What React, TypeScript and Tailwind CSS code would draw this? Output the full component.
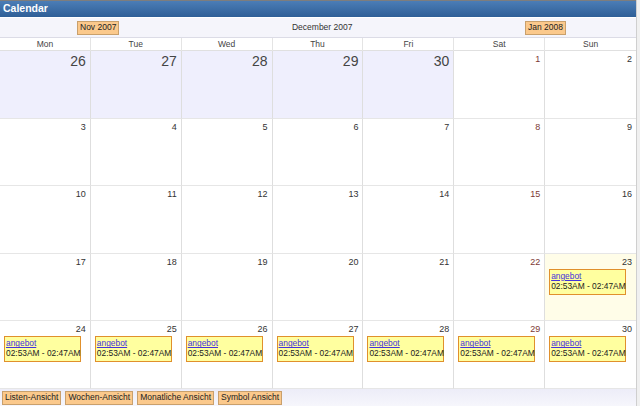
const days = ["Mon", "Tue", "Wed", "Thu", "Fri", "Sat", "Sun"];

type Cell = { n: number; prev?: boolean; today?: boolean; event?: boolean };

const weeks: Cell[][] = [
  [26, 27, 28, 29, 30].map((n) => ({ n, prev: true } as Cell)).concat([{ n: 1 }, { n: 2 }]),
  [3, 4, 5, 6, 7, 8, 9].map((n) => ({ n })),
  [10, 11, 12, 13, 14, 15, 16].map((n) => ({ n })),
  [17, 18, 19, 20, 21, 22].map((n) => ({ n } as Cell)).concat([{ n: 23, today: true, event: true }]),
  [24, 25, 26, 27, 28, 29, 30].map((n) => ({ n, event: true })),
];

function NavButton({ children }: { children: React.ReactNode }) {
  return (
    <span className="inline-flex h-[14px] items-center border border-[#c9a06c] bg-[#fbc98c] px-[2px] text-[8.5px] leading-none text-[#222]">
      {children}
    </span>
  );
}

function Event() {
  return (
    <div className="mx-[4px] mt-[2px] w-[77px] border border-[#e0902c] bg-[#ffff9f] px-[1px] pt-[1px] pb-[3px] text-[8.4px] leading-[10px]">
      <a href="#" className="text-[#4433dd] underline">
        angebot
      </a>
      <div className="whitespace-nowrap text-[#222]">02:53AM - 02:47AM</div>
    </div>
  );
}

export default function App() {
  return (
    <div className="flex h-[406px] w-[640px] overflow-hidden bg-white font-['Liberation_Sans',Arial,sans-serif]">
      <div className="flex w-[636px] flex-col">
        <div className="flex h-[17px] items-center border-t border-[#7d7d7d] bg-gradient-to-b from-[#4b7db6] to-[#2f5f97] pl-[3px] text-[10.5px] font-bold text-white">
          Calendar
        </div>
        <div className="flex h-[21px] items-center border-t border-white border-b border-b-[#dcdce6] bg-[#f5f5fb] text-[8.5px] text-[#333]">
          <div className="w-[77px]" />
          <NavButton>Nov 2007</NavButton>
          <div className="flex-1 text-center">December 2007</div>
          <NavButton>Jan 2008</NavButton>
          <div className="w-[70px]" />
        </div>
        <div className="grid h-[13px] grid-cols-7 border-b border-[#e0e0e0] text-[8.5px] leading-[13px] text-[#444]">
          {days.map((d, i) => (
            <div key={d} className={`text-center ${i < 6 ? "border-r border-[#e4e4e4]" : ""}`}>
              {d}
            </div>
          ))}
        </div>
        <div className="grid h-[338px] grid-cols-7 grid-rows-5">
          {weeks.flatMap((week, wi) =>
            week.map((c, di) => (
              <div
                key={`${wi}-${di}`}
                className={`flex flex-col border-b border-[#e6e6e6] ${di < 6 ? "border-r border-r-[#dedede]" : ""} ${
                  c.prev ? "bg-[#efeffd]" : c.today ? "bg-[#fffde8]" : "bg-white"
                }`}
              >
                <div
                  className={`pr-[4px] text-right ${
                    c.prev ? "pt-[2px] text-[14px] leading-[16px] text-[#444]" : "pt-[3px] text-[9px] leading-[10px]"
                  } ${!c.prev && di === 5 ? "text-[#7d3a34]" : !c.prev ? "text-[#333]" : ""}`}
                >
                  {c.n}
                </div>
                {c.event && <Event />}
              </div>
            ))
          )}
        </div>
        <div className="flex flex-1 items-center gap-[4px] bg-gradient-to-b from-[#ededf8] to-[#f6f6fc] pl-[2px]">
          <NavButton>Listen-Ansicht</NavButton>
          <NavButton>Wochen-Ansicht</NavButton>
          <NavButton>Monatliche Ansicht</NavButton>
          <NavButton>Symbol Ansicht</NavButton>
        </div>
      </div>
      <div className="w-[4px] border-l border-[#cfcfcf] bg-[#f0f0f0]" />
    </div>
  );
}
